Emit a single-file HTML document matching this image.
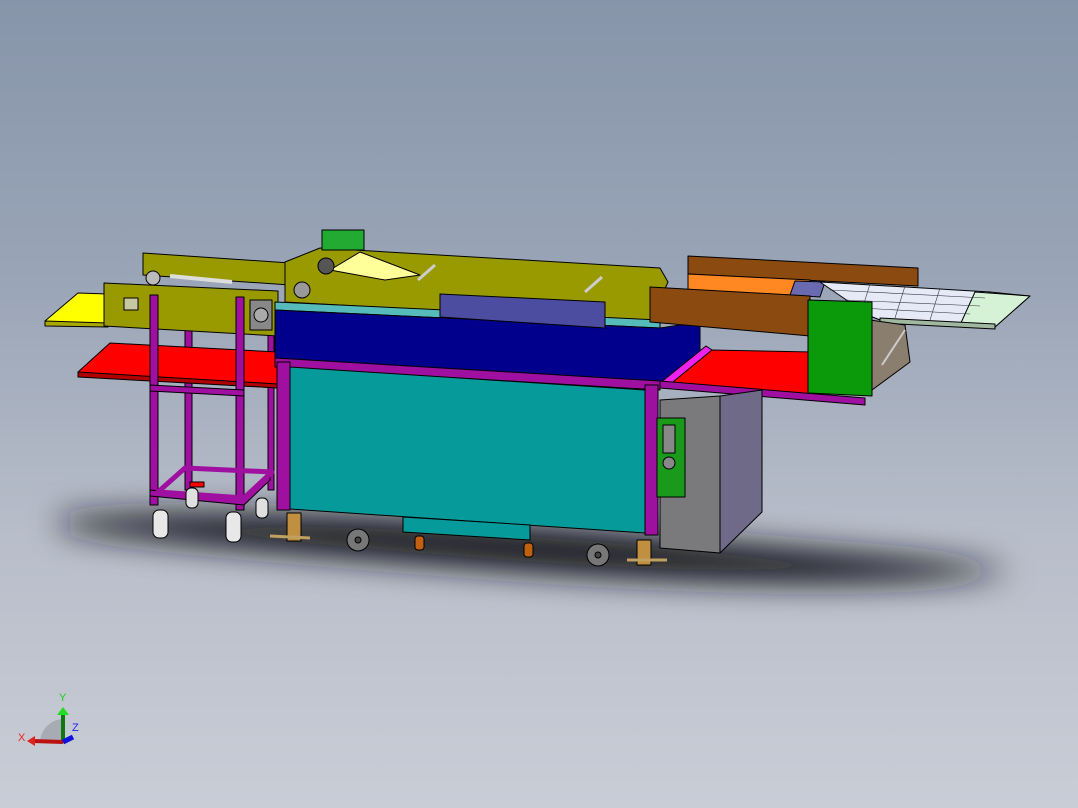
<!DOCTYPE html>
<html><head><meta charset="utf-8"><style>
html,body{margin:0;padding:0;width:1078px;height:808px;overflow:hidden}
body{background:linear-gradient(#8795aa 0%,#9aa5b7 35%,#b7bdc9 65%,#c9cdd6 100%)}
svg{position:absolute;left:0;top:0}
</style></head><body>
<svg width="1078" height="808" viewBox="0 0 1078 808" xmlns="http://www.w3.org/2000/svg">
<defs>
<filter id="b" filterUnits="userSpaceOnUse" x="-100" y="300" width="1300" height="450"><feGaussianBlur stdDeviation="16"/></filter>
</defs>
<!-- shadow -->
<path d="M60,518 C200,505 500,520 700,540 C850,553 980,560 1010,572 C900,590 700,585 500,570 C300,555 120,540 60,528Z" fill="#15161b" filter="url(#b)"/>
<g stroke="#000" stroke-width="1" stroke-linejoin="round">
<!-- left cart back posts -->
<rect x="185" y="300" width="7" height="190" fill="#a010a0"/>
<rect x="268" y="330" width="6" height="160" fill="#a010a0"/>
<!-- left red shelf -->
<polygon points="78,372 110,343 278,352 278,388 78,376" fill="#ff0000"/>
<polygon points="78,372 278,384 278,388 78,377" fill="#b00000"/>
<!-- yellow tray -->
<polygon points="45,321 78,293 108,294 108,326 45,325" fill="#ffff00"/>
<polygon points="45,321 108,323 108,327 45,326" fill="#a8a800"/>
<!-- left olive conveyor back -->
<polygon points="143,253 290,263 290,285 143,275" fill="#999900"/>
<!-- left olive front -->
<polygon points="104,283 278,291 278,336 104,326" fill="#999900"/>
<rect x="124" y="298" width="14" height="12" fill="#c8c8a0"/>
<circle cx="153" cy="278" r="7" fill="#bbb"/>
<rect x="250" y="300" width="22" height="30" fill="#888" />
<circle cx="261" cy="315" r="7" fill="#aaa"/>
<line x1="170" y1="276" x2="232" y2="282" stroke="#ddd" stroke-width="4"/>
<!-- left cart front posts -->
<rect x="150" y="295" width="8" height="210" fill="#a010a0"/>
<rect x="236" y="297" width="8" height="213" fill="#a010a0"/>
<polygon points="150,385 244,390 244,396 150,391" fill="#a010a0"/>
<polygon points="150,496 244,505 270,480 270,474 244,499 150,490" fill="#a010a0"/>
<polygon points="158,492 185,468 272,472 244,498" fill="none" stroke="#a010a0" stroke-width="5"/>
<!-- caster wheels cart -->
<rect x="153" y="510" width="15" height="28" rx="6" fill="#e8e8e8"/>
<rect x="226" y="512" width="15" height="30" rx="6" fill="#e8e8e8"/>
<rect x="186" y="488" width="12" height="20" rx="5" fill="#e0e0e0"/>
<rect x="256" y="498" width="12" height="20" rx="5" fill="#e0e0e0"/>
<rect x="190" y="482" width="14" height="5" fill="#f00"/>
<!-- main olive conveyor -->
<polygon points="320,248 660,268 668,282 650,322 285,302 285,262" fill="#999900"/>
<polygon points="330,270 360,252 420,275 385,280" fill="#ffff99"/>
<rect x="322" y="230" width="42" height="20" fill="#22aa33"/>
<circle cx="302" cy="290" r="8" fill="#999"/>
<circle cx="326" cy="266" r="8" fill="#555"/>
<line x1="418" y1="280" x2="435" y2="265" stroke="#ccc" stroke-width="3"/>
<line x1="585" y1="292" x2="602" y2="277" stroke="#ccc" stroke-width="3"/>
<!-- blue box -->
<polygon points="275,302 660,320 660,328 275,310" fill="#55bbbb"/>
<polygon points="275,310 660,328 700,322 700,370 660,386 275,360" fill="#00008c"/>
<!-- blue-purple bar -->
<polygon points="440,294 605,302 605,328 440,317" fill="#4c4ca0"/>
<!-- right red shelf + frame -->
<polygon points="665,385 710,350 812,352 812,395 665,388" fill="#ff0000"/>
<polygon points="660,383 706,346 712,350 668,386" fill="#ee22ee"/>
<polygon points="660,381 865,398 865,405 660,388" fill="#a010a0"/>
<!-- magenta beam -->
<polygon points="275,358 660,381 660,390 275,367" fill="#a010a0"/>
<!-- teal panel -->
<polygon points="290,367 645,390 645,533 290,509" fill="#079a9a"/>
<polygon points="403,517 530,525 530,540 403,532" fill="#079a9a"/>
<!-- posts -->
<rect x="277" y="362" width="13" height="148" fill="#a010a0"/>
<rect x="645" y="385" width="13" height="150" fill="#a010a0"/>
<!-- gray cabinet -->
<polygon points="660,400 720,396 720,553 660,548" fill="#7a7a7c"/>
<polygon points="720,396 762,390 762,512 720,553" fill="#6e6a87"/>
<rect x="657" y="418" width="28" height="79" fill="#1a9a1a"/>
<rect x="663" y="425" width="12" height="28" fill="#888"/>
<circle cx="669" cy="463" r="6" fill="#888"/>
<!-- brown rails -->
<polygon points="688,256 918,268 918,286 688,274" fill="#8a4a10"/>
<polygon points="688,274 810,280 810,296 688,290" fill="#ff8822"/>
<polygon points="795,281 825,282 820,297 790,295" fill="#6a6ab0"/>
<polygon points="650,287 810,296 810,336 650,322" fill="#8a4a10"/>
<!-- white grid tray -->
<polygon points="820,282 990,292 1030,296 995,327 880,320 870,316" fill="#e6eaf6"/>
<polygon points="975,292 1030,296 995,327 960,325" fill="#d6f2d6"/>
<g stroke="#334" stroke-width="0.6">
<line x1="830" y1="290" x2="985" y2="298"/><line x1="845" y1="300" x2="980" y2="306"/><line x1="860" y1="308" x2="970" y2="314"/>
<line x1="870" y1="284" x2="860" y2="316"/><line x1="905" y1="286" x2="895" y2="318"/><line x1="940" y1="288" x2="930" y2="320"/>
</g>
<polygon points="880,318 995,324 995,329 880,323" fill="#a0b8a0"/>
<!-- tan box -->
<polygon points="870,320 905,325 910,362 872,390 865,390" fill="#8a7e6e"/>
<line x1="882" y1="365" x2="905" y2="330" stroke="#ccc" stroke-width="2"/>
<!-- green box -->
<polygon points="808,300 872,302 872,396 808,393" fill="#0a9a0a"/>
<!-- feet and casters -->
<rect x="287" y="513" width="14" height="28" fill="#c09040"/>
<line x1="270" y1="536" x2="310" y2="538" stroke="#c0a060" stroke-width="3"/>
<rect x="637" y="540" width="14" height="25" fill="#c09040"/>
<line x1="627" y1="560" x2="667" y2="560" stroke="#c0a060" stroke-width="3"/>
<circle cx="358" cy="540" r="11" fill="#777"/><circle cx="358" cy="540" r="3" fill="#444"/>
<circle cx="598" cy="555" r="11" fill="#777"/><circle cx="598" cy="555" r="3" fill="#444"/>
<rect x="415" y="536" width="9" height="14" rx="3" fill="#c06010"/>
<rect x="524" y="543" width="9" height="14" rx="3" fill="#c06010"/>
</g>
<!-- triad -->
<path d="M40,743 A24,24 0 0 1 63,719 L63,743Z" fill="#9a9ea6" opacity="0.7"/>
<line x1="63" y1="743" x2="63" y2="713" stroke="#117711" stroke-width="4"/>
<polygon points="57,715 69,715 63,707" fill="#22dd22"/>
<line x1="63" y1="742" x2="33" y2="741" stroke="#bb1111" stroke-width="4"/>
<polygon points="35,736 35,746 27,741" fill="#dd2222"/>
<line x1="63" y1="742" x2="73" y2="737" stroke="#1111dd" stroke-width="5"/>
<text x="59" y="701" font-family="Liberation Sans,sans-serif" font-size="11" fill="#22cc22">Y</text>
<text x="18" y="741" font-family="Liberation Sans,sans-serif" font-size="11" fill="#ee2222">X</text>
<text x="72" y="731" font-family="Liberation Sans,sans-serif" font-size="11" fill="#2222ee">Z</text>
</svg>
</body></html>
